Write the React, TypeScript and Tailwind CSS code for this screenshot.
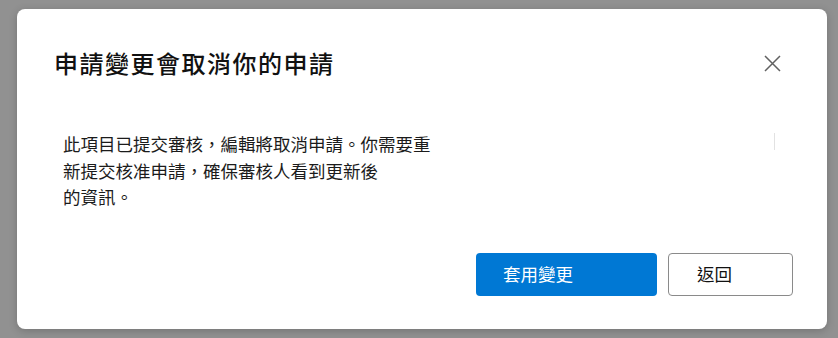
import React from 'react';

const font = { fontFamily: '"Noto Sans CJK TC", "Noto Sans", sans-serif' };

const App: React.FC = () => {
  return (
    <div className="w-[838px] h-[338px] bg-[#919191] pl-[17px] pt-[9px]" style={font}>
      <div className="w-[810px] h-[320px] bg-white rounded-[8px] shadow-[0_2px_8px_rgba(0,0,0,0.2)] flex flex-col">
        <div className="flex items-center justify-between pl-[37px] pr-[46px] pt-[38px]">
          <h2 className="text-[24px] leading-[32px] font-medium text-[#111] tracking-[1.5px]">申請變更會取消你的申請</h2>
          <button className="w-[17px] h-[17px] text-[#616161]">
            <svg viewBox="0 0 17 17" width="17" height="17" fill="none" stroke="currentColor" strokeWidth="1.5">
              <path d="M1 1L16 16M16 1L1 16" />
            </svg>
          </button>
        </div>

        <div className="relative pl-[46px] pt-[52px]">
          <p className="text-[17.5px] leading-[26.5px] text-[#1b1b1b]">
            此項目已提交審核，編輯將取消申請。你需要重<br />
            新提交核准申請，確保審核人看到更新後<br />
            的資訊。
          </p>
          <div className="absolute left-[757px] top-[54px] w-px h-[17px] bg-[#e2e2e2]" />
        </div>

        <div className="flex justify-end gap-[11px] pr-[34px] mt-auto mb-[33px]">
          <button className="w-[181px] h-[43px] bg-[#0078d4] text-white rounded-[4px] text-[17.5px] text-left pl-[27px]">
            套用變更
          </button>
          <button className="w-[125px] h-[43px] bg-white text-[#111] border border-[#8a8a8a] rounded-[4px] text-[17.5px] text-left pl-[28px]">
            返回
          </button>
        </div>
      </div>
    </div>
  );
};

export default App;
